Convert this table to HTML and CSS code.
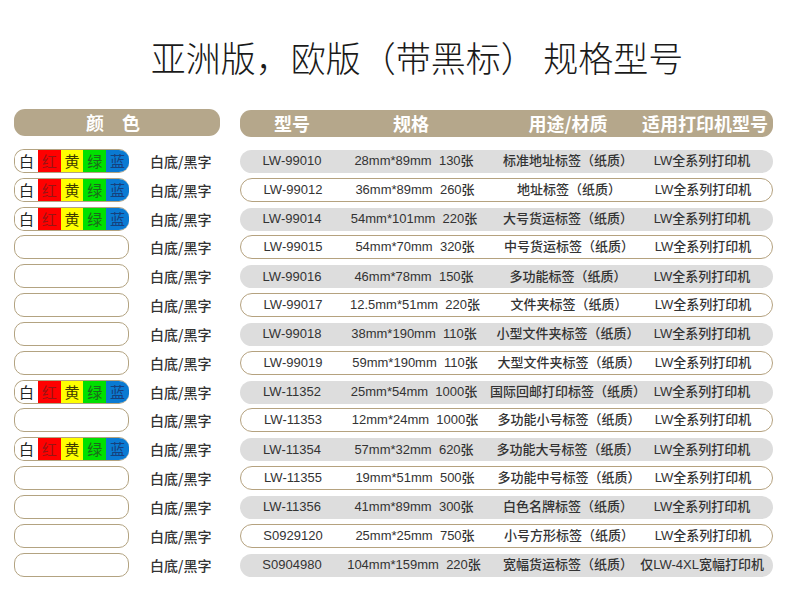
FILE: index.html
```html
<!DOCTYPE html>
<html lang="zh-CN">
<head>
<meta charset="utf-8">
<title>规格型号</title>
<link rel="stylesheet" href="styles.css">
</head>
<body>
<h1 class="title">亚洲版，欧版（带黑标） 规格型号</h1>
<div class="table">
  <div class="head head-left">颜　色</div>
  <div class="head head-right cols">
    <span class="c">型号</span><span class="c">规格</span><span class="c">用途/材质</span><span class="c">适用打印机型号</span>
  </div>

  <div class="swatch full"><span class="s w">白</span><span class="s r">红</span><span class="s y">黄</span><span class="s g">绿</span><span class="s b">蓝</span></div>
  <div class="label">白底/黑字</div>
  <div class="row gray cols"><span class="c">LW-99010</span><span class="c spec">28mm*89mm  130张</span><span class="c zh">标准地址标签（纸质）</span><span class="c zh">LW全系列打印机</span></div>

  <div class="swatch full"><span class="s w">白</span><span class="s r">红</span><span class="s y">黄</span><span class="s g">绿</span><span class="s b">蓝</span></div>
  <div class="label">白底/黑字</div>
  <div class="row line cols"><span class="c">LW-99012</span><span class="c spec">36mm*89mm  260张</span><span class="c zh">地址标签（纸质）</span><span class="c zh">LW全系列打印机</span></div>

  <div class="swatch full"><span class="s w">白</span><span class="s r">红</span><span class="s y">黄</span><span class="s g">绿</span><span class="s b">蓝</span></div>
  <div class="label">白底/黑字</div>
  <div class="row gray cols"><span class="c">LW-99014</span><span class="c spec">54mm*101mm  220张</span><span class="c zh">大号货运标签（纸质）</span><span class="c zh">LW全系列打印机</span></div>

  <div class="swatch"></div>
  <div class="label">白底/黑字</div>
  <div class="row line cols"><span class="c">LW-99015</span><span class="c spec">54mm*70mm  320张</span><span class="c zh">中号货运标签（纸质）</span><span class="c zh">LW全系列打印机</span></div>

  <div class="swatch"></div>
  <div class="label">白底/黑字</div>
  <div class="row gray cols"><span class="c">LW-99016</span><span class="c spec">46mm*78mm  150张</span><span class="c zh">多功能标签（纸质）</span><span class="c zh">LW全系列打印机</span></div>

  <div class="swatch"></div>
  <div class="label">白底/黑字</div>
  <div class="row line cols"><span class="c">LW-99017</span><span class="c spec">12.5mm*51mm  220张</span><span class="c zh">文件夹标签（纸质）</span><span class="c zh">LW全系列打印机</span></div>

  <div class="swatch"></div>
  <div class="label">白底/黑字</div>
  <div class="row gray cols"><span class="c">LW-99018</span><span class="c spec">38mm*190mm  110张</span><span class="c zh">小型文件夹标签（纸质）</span><span class="c zh">LW全系列打印机</span></div>

  <div class="swatch"></div>
  <div class="label">白底/黑字</div>
  <div class="row line cols"><span class="c">LW-99019</span><span class="c spec">59mm*190mm  110张</span><span class="c zh">大型文件夹标签（纸质）</span><span class="c zh">LW全系列打印机</span></div>

  <div class="swatch full"><span class="s w">白</span><span class="s r">红</span><span class="s y">黄</span><span class="s g">绿</span><span class="s b">蓝</span></div>
  <div class="label">白底/黑字</div>
  <div class="row gray cols"><span class="c">LW-11352</span><span class="c spec">25mm*54mm  1000张</span><span class="c zh">国际回邮打印标签（纸质）</span><span class="c zh">LW全系列打印机</span></div>

  <div class="swatch"></div>
  <div class="label">白底/黑字</div>
  <div class="row line cols"><span class="c">LW-11353</span><span class="c spec">12mm*24mm  1000张</span><span class="c zh">多功能小号标签（纸质）</span><span class="c zh">LW全系列打印机</span></div>

  <div class="swatch full"><span class="s w">白</span><span class="s r">红</span><span class="s y">黄</span><span class="s g">绿</span><span class="s b">蓝</span></div>
  <div class="label">白底/黑字</div>
  <div class="row gray cols"><span class="c">LW-11354</span><span class="c spec">57mm*32mm  620张</span><span class="c zh">多功能大号标签（纸质）</span><span class="c zh">LW全系列打印机</span></div>

  <div class="swatch"></div>
  <div class="label">白底/黑字</div>
  <div class="row line cols"><span class="c">LW-11355</span><span class="c spec">19mm*51mm  500张</span><span class="c zh">多功能中号标签（纸质）</span><span class="c zh">LW全系列打印机</span></div>

  <div class="swatch"></div>
  <div class="label">白底/黑字</div>
  <div class="row gray cols"><span class="c">LW-11356</span><span class="c spec">41mm*89mm  300张</span><span class="c zh">白色名牌标签（纸质）</span><span class="c zh">LW全系列打印机</span></div>

  <div class="swatch"></div>
  <div class="label">白底/黑字</div>
  <div class="row line cols"><span class="c">S0929120</span><span class="c spec">25mm*25mm  750张</span><span class="c zh">小号方形标签（纸质）</span><span class="c zh">LW全系列打印机</span></div>

  <div class="swatch"></div>
  <div class="label">白底/黑字</div>
  <div class="row gray cols"><span class="c">S0904980</span><span class="c spec">104mm*159mm  220张</span><span class="c zh">宽幅货运标签（纸质）</span><span class="c zh">仅LW-4XL宽幅打印机</span></div>
</div>
</body>
</html>
```
FILE: styles.css
```css
html, body {
  margin: 0;
  padding: 0;
  background: #ffffff;
}
body {
  width: 790px;
  height: 601px;
  overflow: hidden;
  font-family: "Noto Sans CJK SC", sans-serif;
  color: #333;
}
.title {
  margin: 0;
  padding: 35px 0 0 44px;
  height: 44px;
  line-height: 44px;
  text-align: center;
  font-size: 35px;
  font-weight: 300;
  color: #1a1a1a;
}
.table {
  margin-top: 30px;
  padding-left: 14px;
  display: grid;
  grid-template-columns: 115px 111px 533px;
  grid-template-rows: 35px;
  grid-auto-rows: 24px;
  row-gap: 4.857px;
}
.head {
  height: 27px;
  background: #b5a78b;
  border-radius: 11px;
  color: #ffffff;
  font-size: 18px;
  font-weight: 700;
  line-height: 27px;
}
.head-left {
  grid-column: 1 / 3;
  margin-right: 20px;
  text-align: center;
  padding-right: 8px;
}
.head-right {
  grid-column: 3;
  margin-top: 1px;
}
.cols {
  display: grid;
  grid-template-columns: 104px 140px 168px 100px;
  padding-right: 21px;
  align-items: center;
}
.c {
  display: flex;
  justify-content: center;
  white-space: pre;
}
.head-right .c:nth-child(2) { position: relative; left: -3px; }
.head-right .c:nth-child(4) { position: relative; left: 3px; }

.swatch {
  box-sizing: border-box;
  height: 24px;
  border: 1px solid #b3a381;
  border-radius: 10px;
  display: flex;
  overflow: hidden;
  background: #fff;
}
.swatch.full {
  border-right: none;
}
.s {
  flex: 1;
  display: flex;
  align-items: center;
  justify-content: center;
  font-size: 15px;
  line-height: 22px;
}
.w { color: #222; background: #ffffff; }
.r { color: #9a1414; background: #ff0000; }
.y { color: #3d3800; background: #ffff00; }
.g { color: #1c6a1c; background: #00e000; }
.b { color: #17407c; background: #0a7ad2; }

.label {
  padding-left: 21px;
  font-size: 14px;
  font-weight: 500;
  line-height: 24px;
  color: #333;
}
.row {
  box-sizing: border-box;
  height: 24px;
  border-radius: 12px;
  font-family: "Liberation Sans", "Noto Sans CJK SC", sans-serif;
  font-size: 13px;
  font-weight: 500;
  color: #333;
  line-height: 22px;
}
.row.gray {
  background: #dddddd;
  margin-top: 1px;
  height: 23px;
}
.row.line {
  border: 1.5px solid #b5a27f;
  background: #fff;
}
```
